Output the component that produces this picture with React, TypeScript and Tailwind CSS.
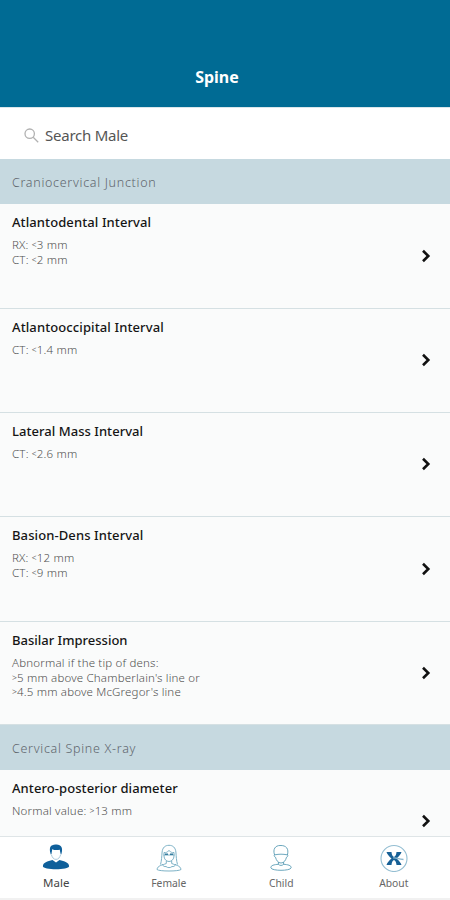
import type { ReactNode } from "react";

type Item = { title: string; lines: string[]; tracking: string; height: string };

const junction: Item[] = [
  { title: "Atlantodental Interval", lines: ["RX: <3 mm", "CT: <2 mm"], tracking: "tracking-[0.1px]", height: "h-[105px]" },
  { title: "Atlantooccipital Interval", lines: ["CT: <1.4 mm"], tracking: "tracking-[0.11px]", height: "h-[104px]" },
  { title: "Lateral Mass Interval", lines: ["CT: <2.6 mm"], tracking: "tracking-[0.04px]", height: "h-[104px]" },
  { title: "Basion-Dens Interval", lines: ["RX: <12 mm", "CT: <9 mm"], tracking: "tracking-[0.1px]", height: "h-[105px]" },
  {
    title: "Basilar Impression",
    lines: ["Abnormal if the tip of dens:", ">5 mm above Chamberlain's line or", ">4.5 mm above McGregor's line"],
    tracking: "tracking-[0px]",
    height: "h-[103px]",
  },
];

function Section({ children }: { children: ReactNode }) {
  return (
    <h2 className="flex h-[45px] shrink-0 items-center bg-[#c6d9e0] px-3 pt-[3px] text-[12.5px] font-light tracking-[0.7px] text-[#5f666d]">
      {children}
    </h2>
  );
}

function Line({ text }: { text: string }) {
  return (
    <p>
      {text.split(/([<>])/).map((part, i) =>
        part === "<" || part === ">" ? (
          <span key={i} className="align-[1px] text-[8.5px] leading-none">
            {part}
          </span>
        ) : (
          part
        ),
      )}
    </p>
  );
}

function Row({ item }: { item: Item }) {
  return (
    <div className={`flex shrink-0 items-center justify-between border-b border-[#d5e0e3] bg-[#fafbfb] pl-3 pr-[17px] ${item.height}`}>
      <div className="self-start pt-[9px]">
        <h3 className={`text-[13px] leading-[18px] font-medium whitespace-nowrap text-[#151515] ${item.tracking}`}>{item.title}</h3>
        <div className="mt-[7px] text-[11.5px] leading-[14.5px] font-light tracking-[0.18px] whitespace-nowrap text-[#505050]">
          {item.lines.map((line) => (
            <Line key={line} text={line} />
          ))}
        </div>
      </div>
      <svg className="mb-px h-[14px] w-[14px]" viewBox="0 0 14 14" fill="none" stroke="#111" strokeWidth="2.6">
        <path d="M4 1.8 9.3 7 4 12.2" />
      </svg>
    </div>
  );
}

function MaleIcon() {
  return (
    <svg className="h-[28px] w-[28px]" viewBox="0 0 28 28" fill="none">
      <path d="M8.6 10C6.8 3.500 8.500.8 13.500.6c5.600-.5 7.800 3 6 9.400l-1-.2-.7-4.100c-3 .7-6 .4-7.600-.5L9.500 10z" fill="#0f609b" />
      <path d="M9 8.500c-.8.2-.4 2.500.6 2.600.5 2.200 2 4.300 4.400 4.300s3.900-2.100 4.400-4.300c1-.1 1.400-2.400.6-2.600" stroke="#8db5cf" strokeWidth=".7" />
      <path d="M10.500 16 14 18.500l3.500-2.500c5 1.500 9.500 2.300 9.600 6.300 0 4-26.200 4-26.200 0 .1-4 4.600-4.800 9.600-6.300" fill="#0f609b" />
    </svg>
  );
}

function FemaleIcon() {
  return (
    <svg className="h-[28px] w-[28px]" viewBox="0 0 28 28" fill="none" stroke="#6fa9bf" strokeWidth=".9">
      <path d="M5.500 20.500c1.200-4 1.200-8 1.600-12.500C7.600 3.600 10 1.300 14 1.300s6.400 2.300 6.900 6.700c.4 4.500.4 8.500 1.600 12.500" />
      <path d="M9 8.500c2 .6 3-.4 5-2 2 1.600 3 2.600 5 2v3.500c0 3-2.200 5.500-5 5.500S9 15 9 12zM8.500 11h11" />
      <path d="M10 10.200h3M15 10.200h3" stroke="#377d9f" strokeWidth="1.500" />
      <path d="M11.300 17v2.500c-4 1.700-8.800 2-9.300 6 2 2 22 2 24 0-.5-4-5.300-4.300-9.300-6V17M7 20c1 2 2.500 3 4 2.500 1.500 1.500 4.500 1.500 6 0 1.500.5 3-.5 4-2.500" />
    </svg>
  );
}

function ChildIcon() {
  return (
    <svg className="h-[28px] w-[28px]" viewBox="0 0 28 28" fill="none" stroke="#5b9db5" strokeWidth=".9">
      <path d="M7.600 11C5.500 5 8.500 1.500 13 1.500c6.500-.3 9 3.500 7.400 9.500M8 10.800c4-.8 8-.8 12 0" />
      <path d="M8 10.500c-1.400 0-.8 2.700.5 2.700.7 3 2.500 5.800 5.500 5.800s4.800-2.800 5.500-5.800c1.300 0 1.900-2.700.5-2.700M11.400 18v2.500M16.600 18v2.500" />
      <path d="M11.400 20.300c-4 .3-8 1-7.500 3.600.7 3.200 19.500 3.200 20.200 0 .5-2.600-3.500-3.300-7.500-3.600-1.500 1.500-3.700 1.500-5.200 0" />
    </svg>
  );
}

function AboutIcon() {
  return (
    <svg className="h-[28px] w-[28px]" viewBox="0 0 28 28" fill="none">
      <circle cx="14" cy="14.500" r="13" stroke="#94bed2" strokeWidth="1.100" />
      <path d="M6.500 8h5c.2 2.500 1 4.300 2.500 5 1.500-.7 2.300-2.500 2.500-5h5c-.7 2.300-2.600 4.500-5 6.500 2.400 2 4.300 4.200 5 6.500h-5c-.2-2.500-1-4.300-2.500-5-1.500.7-2.300 2.500-2.500 5h-5c.7-2.300 2.600-4.500 5-6.500-2.400-2-4.300-4.200-5-6.500" fill="#176096" />
      <path d="M13 14c3-1 5 1.500 10.500 1.500" stroke="#8cb8ce" strokeWidth="1.300" />
    </svg>
  );
}

const tabs = [
  { label: "Male", icon: <MaleIcon />, style: "text-[11.5px] text-[#454545]" },
  { label: "Female", icon: <FemaleIcon />, style: "text-[10.3px] text-[#666]" },
  { label: "Child", icon: <ChildIcon />, style: "text-[10.3px] text-[#666]" },
  { label: "About", icon: <AboutIcon />, style: "text-[10.3px] text-[#666]" },
];

export default function App() {
  return (
    <div className="flex h-[900px] w-[450px] flex-col overflow-hidden bg-white font-['Noto_Sans','Open_Sans',sans-serif]">
      <header className="flex h-[107px] shrink-0 items-end justify-center bg-[#006b94] pr-[16px] pb-[18px]">
        <h1 className="text-[16px] leading-6 font-bold text-white">Spine</h1>
      </header>
      <div className="flex h-[52px] shrink-0 items-center gap-[6px] border-t border-[#d9e6eb] bg-white pl-6 pt-[3px]">
        <svg className="h-[15px] w-[15px]" viewBox="0 0 15 15" fill="none" stroke="#b1b1b1" strokeWidth="1.300">
          <circle cx="5.700" cy="5.700" r="4.700" />
          <path d="m9.200 9.200 5 5" />
        </svg>
        <span className="text-[15px] tracking-[-0.24px] text-[#555]">Search Male</span>
      </div>
      <main className="flex min-h-0 flex-1 flex-col overflow-hidden">
        <Section>Craniocervical Junction</Section>
        {junction.map((item) => (
          <Row key={item.title} item={item} />
        ))}
        <Section>Cervical Spine X-ray</Section>
        <Row item={{ title: "Antero-posterior diameter", lines: ["Normal value: >13 mm"], tracking: "tracking-[0.08px]", height: "h-[104px]" }} />
      </main>
      <nav className="grid h-[64px] shrink-0 grid-cols-4 border-t border-[#dfe5e7] border-b-2 border-b-[#f1f1f1] bg-white pt-[7px]">
        {tabs.map((tab) => (
          <div key={tab.label} className="flex flex-col items-center">
            {tab.icon}
            <span className={`mt-[3px] leading-4 ${tab.style}`}>{tab.label}</span>
          </div>
        ))}
      </nav>
    </div>
  );
}
